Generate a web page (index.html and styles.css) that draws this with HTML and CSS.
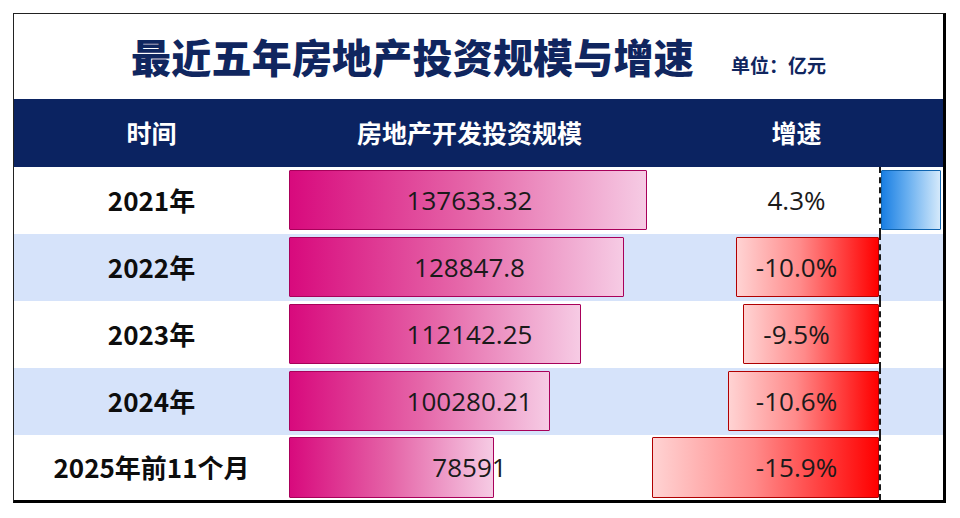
FILE: index.html
```html
<!DOCTYPE html>
<html lang="zh-CN">
<head>
<meta charset="utf-8">
<title>最近五年房地产投资规模与增速</title>
<link rel="stylesheet" href="styles.css">
</head>
<body>
<div class="frame">
  <div class="title-row">
    <h1 class="title">最近五年房地产投资规模与增速</h1>
    <span class="unit">单位：亿元</span>
  </div>
  <div class="head-row">
    <div class="head">时间</div>
    <div class="head">房地产开发投资规模</div>
    <div class="head">增速</div>
  </div>
  <div class="row">
    <div class="year">2021年</div>
    <div class="scale"><div class="bar" style="width:358px"></div><span class="val">137633.32</span></div>
    <div class="growth"><div class="neg"></div><div class="pos"><div class="gbar up" style="width:60px"></div></div><span class="pct">4.3%</span></div>
  </div>
  <div class="row alt">
    <div class="year">2022年</div>
    <div class="scale"><div class="bar" style="width:335px"></div><span class="val">128847.8</span></div>
    <div class="growth"><div class="neg"><div class="gbar down" style="width:143px"></div></div><div class="pos"></div><span class="pct">-10.0%</span></div>
  </div>
  <div class="row">
    <div class="year">2023年</div>
    <div class="scale"><div class="bar" style="width:292px"></div><span class="val">112142.25</span></div>
    <div class="growth"><div class="neg"><div class="gbar down" style="width:136px"></div></div><div class="pos"></div><span class="pct">-9.5%</span></div>
  </div>
  <div class="row alt">
    <div class="year">2024年</div>
    <div class="scale"><div class="bar" style="width:261px"></div><span class="val">100280.21</span></div>
    <div class="growth"><div class="neg"><div class="gbar down" style="width:151px"></div></div><div class="pos"></div><span class="pct">-10.6%</span></div>
  </div>
  <div class="row last">
    <div class="year">2025年前11个月</div>
    <div class="scale"><div class="bar" style="width:205px"></div><span class="val">78591</span></div>
    <div class="growth"><div class="neg"><div class="gbar down" style="width:227px"></div></div><div class="pos"></div><span class="pct">-15.9%</span></div>
  </div>
</div>
</body>
</html>
```

FILE: styles.css
```css
* { box-sizing: border-box; }
html, body { margin: 0; padding: 0; background: #ffffff; }
body {
  width: 960px;
  height: 518px;
  padding: 13px 0 0 13px;
  font-family: "Noto Sans CJK SC", "Noto Sans", sans-serif;
}
.frame {
  width: 933px;
  height: 490px;
  border-top: 1px solid #222;
  border-left: 1px solid #222;
  border-right: 3px solid #000;
  border-bottom: 3px solid #000;
  display: flex;
  flex-direction: column;
}
.title-row {
  height: 85px;
  display: flex;
  justify-content: center;
  align-items: baseline;
  gap: 37px;
  padding-top: 14px;
}
.title {
  margin: 0;
  font-size: 40px;
  line-height: 56px;
  font-weight: 900;
  color: #10265f;
  letter-spacing: 0.2px;
}
.unit {
  font-size: 19px;
  font-weight: 700;
  color: #10265f;
}
.head-row {
  height: 68px;
  background: #0b2361;
  display: grid;
  grid-template-columns: 275px 361px 1fr;
  align-items: center;
}
.head {
  color: #ffffff;
  font-size: 25px;
  font-weight: 700;
  text-align: center;
  line-height: 1;
  padding-bottom: 2px;
}
.row {
  height: 67px;
  display: grid;
  grid-template-columns: 275px 361px 1fr;
  background: #ffffff;
}
.row.alt { background: #d6e3fa; }
.row.last { flex: 1; height: auto; }
.year {
  display: flex;
  align-items: center;
  justify-content: center;
  font-size: 26px;
  font-weight: 700;
  color: #0d0d0d;
  padding-bottom: 2px;
}
.scale {
  display: grid;
}
.bar, .val { grid-area: 1 / 1; }
.bar {
  justify-self: start;
  align-self: start;
  margin-top: 3px;
  height: 60px;
  border: 1.5px solid #a8005a;
  border-radius: 1px;
  background: linear-gradient(90deg, #d80a7d 0%, #e565a8 50%, #f6cbe4 100%);
}
.row.last .bar { margin-top: 2px; height: 61px; }
.val, .pct {
  justify-self: center;
  align-self: center;
  font-family: "Open Sans", "Noto Sans", sans-serif;
  font-size: 26px;
  color: #1a1a1a;
  position: relative;
  top: -1px;
}
.growth {
  display: grid;
  grid-template-columns: 229px 1fr;
}
.neg { grid-area: 1 / 1; display: flex; justify-content: flex-end; align-items: flex-start; }
.pos {
  grid-area: 1 / 2;
  border-left: 2px dashed #1a1a1a;
  display: flex;
  align-items: flex-start;
}
.pct { grid-area: 1 / 1 / 2 / 3; }
.gbar {
  margin-top: 3px;
  height: 60px;
  border-radius: 1px;
}
.row.last .gbar { margin-top: 2px; height: 61px; }
.gbar.down {
  border: 1.5px solid #b00000;
  background: linear-gradient(90deg, #ffd3d3 0%, #ff8a8a 45%, #ff0000 100%);
}
.gbar.up {
  border: 1.5px solid #0f64b0;
  background: linear-gradient(90deg, #1a7fe3 0%, #6ab0f0 45%, #d4e9fb 100%);
}
```
